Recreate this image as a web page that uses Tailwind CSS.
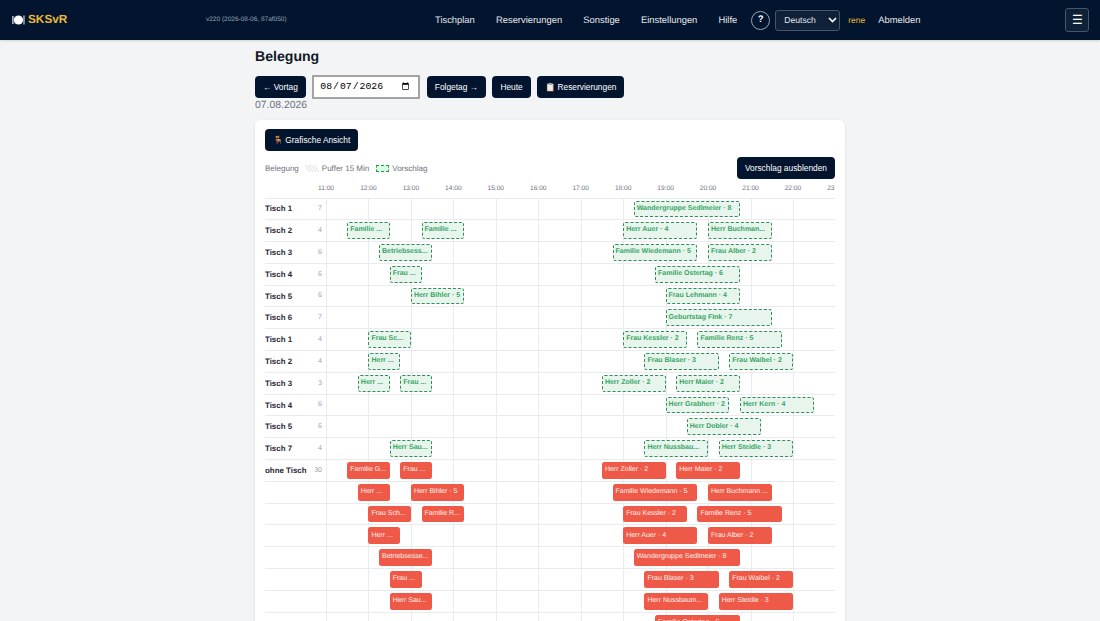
<!DOCTYPE html>
<html lang="en" class="h-[621px] overflow-hidden">
<head>
    <meta charset="UTF-8">
    <meta name="viewport" content="width=device-width, initial-scale=1.0">
    <title>Belegung</title>
    <script src="https://cdn.jsdelivr.net/npm/@tailwindcss/browser@4"></script>
</head>
<body class="h-[621px] overflow-hidden bg-[#f3f4f6] text-[#111827] font-['Liberation_Sans',sans-serif] [text-rendering:geometricPrecision]">
    <nav class="h-10 bg-[#03152e] flex items-center relative shadow-sm">
        <div class="w-[206px] pl-3 flex items-center gap-[3px] shrink-0">
            <svg width="13" height="12" viewBox="0 0 13 12"><path d="M0.5 2v8M1.8 2v8" stroke="#cbd5e1" stroke-width="0.8"/><circle cx="6.5" cy="6" r="4.6" fill="#fff"/><path d="M12 1.5v9" stroke="#cbd5e1" stroke-width="1.2"/></svg>
            <span class="text-[#e8b93a] font-bold text-[11.8px]">SKSvR</span>
        </div>
        <span class="text-[6.5px] text-[#94a3b8] w-[229px] shrink-0">v220 (2026-08-06, 87af050)</span>
        <div class="flex items-center text-[#e5e7eb] text-[9.4px] gap-[21.2px]">
            <span>Tischplan</span><span>Reservierungen</span><span>Sonstige</span><span>Einstellungen</span><span>Hilfe</span>
        </div>
        <span class="ml-[14px] w-[19px] h-[19px] rounded-full border border-[#94a3b8] text-white text-[9.5px] font-bold flex items-center justify-center">?</span>
        <div class="ml-[5px] w-[65px] h-[21px] rounded-[3px] border border-[#475569] bg-[#0f2138] text-[#e5e7eb] text-[8.6px] flex items-center pl-2 justify-between pr-[2px]">
            <span>Deutsch</span>
            <svg width="9" height="6" viewBox="0 0 9 6"><path d="M1 1l3.5 3.5L8 1" fill="none" stroke="#fff" stroke-width="1.6"/></svg>
        </div>
        <span class="ml-2 text-[8.5px] text-[#e8b93a]">rene</span>
        <span class="ml-[13px] text-[9.4px] text-[#e5e7eb]">Abmelden</span>
        <button class="absolute left-[1065px] top-2 w-6 h-6 rounded-[3px] border border-[#475569] bg-[#0f2138] text-white text-[12px] flex items-center justify-center">☰</button>
    </nav>

    <main class="w-[590px] ml-[255px]">
        <h1 class="text-[14.1px] font-bold mt-[7px] leading-[18px]">Belegung</h1>
        <div class="flex items-center gap-[6.5px] mt-[10px] h-6">
            <button class="h-[22px] px-2 rounded-[4px] bg-[#03152e] text-white text-[8.35px]">← Vortag</button>
            <input type="date" value="2026-08-07" class="w-[108px] h-[24px] bg-white border-2 border-[#a3a3a3] pl-[5px] pr-[6px] text-[9.8px] text-black font-['Liberation_Mono',monospace]">
            <button class="h-[22px] px-2 rounded-[4px] bg-[#03152e] text-white text-[8.35px]">Folgetag →</button>
            <button class="h-[22px] px-2 rounded-[4px] bg-[#03152e] text-white text-[8.35px]">Heute</button>
            <button class="h-[22px] px-2 rounded-[4px] bg-[#03152e] text-white text-[8.35px]">📋 Reservierungen</button>
        </div>
        <p class="text-[10.4px] text-[#6b7280] leading-[13px]">07.08.2026</p>

        <section class="mt-2 bg-white rounded-[6px] px-[10px] pt-[9px] shadow-sm">
            <button class="block h-[22px] px-2 rounded-[4px] bg-[#03152e] text-white text-[8.35px]">🪑 Grafische Ansicht</button>
            <div class="flex items-center justify-between mt-[6px] h-[22px]">
                <div class="flex items-center text-[8px] text-[#6b7280] mt-px">
                    <span>Belegung</span>
                    <svg class="ml-[6px] mr-[3px]" width="14" height="7" viewBox="0 0 14 7"><path d="M0 0l5 7M3 0l5 7M6 0l5 7M9 0l5 7" stroke="#cbd5e1" fill="none" stroke-width="0.8"/></svg>
                    <span>Puffer 15 Min</span>
                    <span class="ml-[7px] mr-[3px] w-[13px] h-[7px] border border-dashed border-[#16a34a] bg-[#dcfce7]"></span>
                    <span>Vorschlag</span>
                </div>
                <button class="h-[22px] px-2 rounded-[4px] bg-[#03152e] text-white text-[8.35px]">Vorschlag ausblenden</button>
            </div>
            <div id="chart" class="overflow-hidden"></div>
        </section>
    </main>

    <script>
        // [label, seats, [[start, minutes, text], ...]]
        const green = [
            ["Tisch 1", 7, [["18:15", 150, "Wandergruppe Sedlmeier · 8"]]],
            ["Tisch 2", 4, [["11:30", 60, "Familie ..."], ["13:15", 60, "Familie ..."], ["18:00", 105, "Herr Auer · 4"], ["20:00", 90, "Herr Buchman..."]]],
            ["Tisch 3", 6, [["12:15", 75, "Betriebsess..."], ["17:45", 120, "Familie Wiedemann · 5"], ["20:00", 90, "Frau Alber · 2"]]],
            ["Tisch 4", 6, [["12:30", 45, "Frau ..."], ["18:45", 120, "Familie Ostertag · 6"]]],
            ["Tisch 5", 6, [["13:00", 75, "Herr Bihler · 5"], ["19:00", 105, "Frau Lehmann · 4"]]],
            ["Tisch 6", 7, [["19:00", 150, "Geburtstag Fink · 7"]]],
            ["Tisch 1", 4, [["12:00", 60, "Frau Sc..."], ["18:00", 90, "Frau Kessler · 2"], ["19:45", 120, "Familie Renz · 5"]]],
            ["Tisch 2", 4, [["12:00", 45, "Herr ..."], ["18:30", 105, "Frau Blaser · 3"], ["20:30", 90, "Frau Waibel · 2"]]],
            ["Tisch 3", 3, [["11:45", 45, "Herr ..."], ["12:45", 45, "Frau ..."], ["17:30", 90, "Herr Zoller · 2"], ["19:15", 90, "Herr Maier · 2"]]],
            ["Tisch 4", 6, [["19:00", 90, "Herr Grabherr · 2"], ["20:45", 105, "Herr Kern · 4"]]],
            ["Tisch 5", 6, [["19:30", 105, "Herr Dobler · 4"]]],
            ["Tisch 7", 4, [["12:30", 60, "Herr Sau..."], ["18:30", 90, "Herr Nussbau..."], ["20:15", 105, "Herr Steidle · 3"]]],
        ];
        const red = [
            ["ohne Tisch", 30, [["11:30", 60, "Familie G..."], ["12:45", 45, "Frau ..."], ["17:30", 90, "Herr Zoller · 2"], ["19:15", 90, "Herr Maier · 2"]]],
            ["", "", [["11:45", 45, "Herr ..."], ["13:00", 75, "Herr Bihler · 5"], ["17:45", 120, "Familie Wiedemann · 5"], ["20:00", 90, "Herr Buchmann ..."]]],
            ["", "", [["12:00", 60, "Frau Sch..."], ["13:15", 60, "Familie R..."], ["18:00", 90, "Frau Kessler · 2"], ["19:45", 120, "Familie Renz · 5"]]],
            ["", "", [["12:00", 45, "Herr ..."], ["18:00", 105, "Herr Auer · 4"], ["20:00", 90, "Frau Alber · 2"]]],
            ["", "", [["12:15", 75, "Betriebsesse..."], ["18:15", 150, "Wandergruppe Sedlmeier · 8"]]],
            ["", "", [["12:30", 45, "Frau ..."], ["18:30", 105, "Frau Blaser · 3"], ["20:30", 90, "Frau Waibel · 2"]]],
            ["", "", [["12:30", 60, "Herr Sau..."], ["18:30", 90, "Herr Nussbaum..."], ["20:15", 105, "Herr Steidle · 3"]]],
            ["", "", [["18:45", 120, "Familie Ostertag · 6"]]],
        ];

        const hourW = 42.45;
        const toX = t => { const [h, m] = t.split(":").map(Number); return (h - 11 + m / 60) * hourW; };
        const hours = [];
        for (let h = 11; h <= 23; h++) hours.push(h);

        const gridLines = hours.map(h =>
            `<span class="absolute top-0 bottom-0 w-px bg-[#e9ebee]" style="left:${(h - 11) * hourW}px"></span>`).join("");

        const head = hours.map(h =>
            `<span class="absolute top-0 -translate-x-1/2 text-[6.6px] text-[#6b7280] leading-[20px]" style="left:${(h - 11) * hourW}px">${h}:00</span>`).join("");

        function row([label, seats, bars], barClass) {
            const items = bars.map(([start, mins, text]) =>
                `<div class="absolute top-[2px] bottom-[2px] rounded-[2.5px] text-[7px] flex items-center whitespace-nowrap overflow-hidden ${barClass}" style="left:${toX(start)}px;width:${mins / 60 * hourW}px">${text}</div>`).join("");
            return `<div class="flex h-[21.8px] border-b border-[#e9ebee]">
                <div class="w-[61px] shrink-0 flex items-center justify-between pr-[4px] pt-px text-[7.9px] font-bold text-[#1f2937]"><span class="whitespace-nowrap">${label}</span><span class="font-normal text-[#9ca3af] text-[7px]">${seats}</span></div>
                <div class="relative flex-1">${gridLines}${items}</div>
            </div>`;
        }

        document.getElementById("chart").innerHTML =
            `<div class="flex h-[19.5px] border-b border-[#e9ebee]"><div class="w-[61px] shrink-0"></div><div class="relative flex-1">${head}</div></div>` +
            green.map(r => row(r, "px-[2px] border border-dashed border-[#2f8f5b] bg-[#e8f5ec] text-[#37a566] font-bold")).join("") +
            red.map(r => row(r, "px-[3px] bg-[#ef5a48] text-white/90")).join("");
    </script>
</body>
</html>
